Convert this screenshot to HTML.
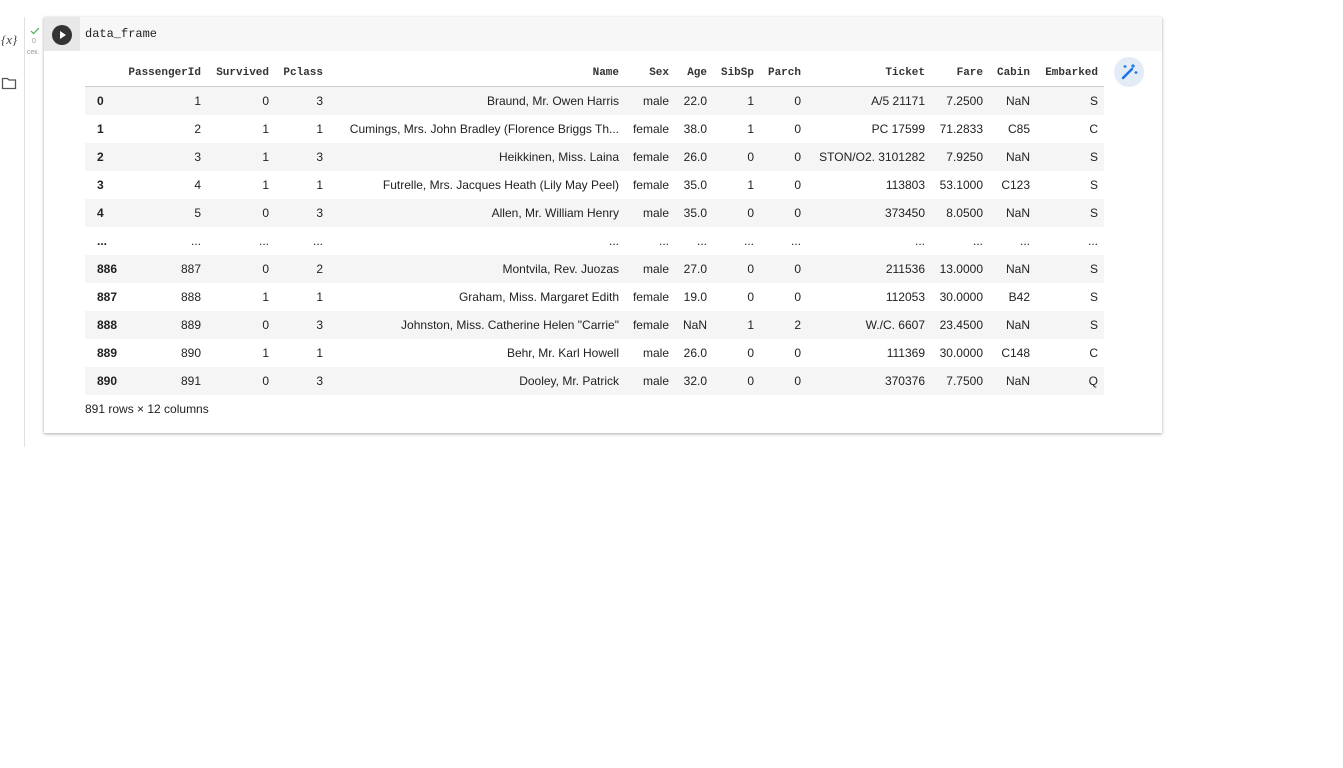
<!DOCTYPE html>
<html><head><style>
body{margin:0;width:1343px;height:768px;background:#fff;position:relative;overflow:hidden;font-family:"Liberation Sans",Arial,sans-serif;}
.vline{position:absolute;left:24px;top:17px;width:1px;height:430px;background:#e0e0e0}
.cell{position:absolute;left:44px;top:17px;width:1118px;height:416px;background:#fff;box-shadow:0 1px 3px rgba(0,0,0,.35)}
.run{position:absolute;left:0;top:0;width:36px;height:34px;background:#e8e8e8}
.code{position:absolute;left:36px;top:0;right:0;height:34px;background:#f7f7f7;font-family:"Liberation Mono",monospace;font-size:12px;line-height:35px;padding-left:5px;color:#222}
table{position:absolute;left:41px;top:42px;width:1019px;border-collapse:collapse;table-layout:fixed;font-size:12px;color:#222}
td,th{text-align:right;padding:0 6px 0 0;height:28px;white-space:nowrap;overflow:hidden}
th{font-family:"Liberation Mono",monospace;font-size:11px;font-weight:bold;height:27px;border-bottom:1px solid #ccc;color:#333}
tbody tr:nth-child(odd){background:#f5f5f5}
td:first-child{text-align:left;padding:0 0 0 12px;font-weight:bold;overflow:visible}
.foot{position:absolute;left:41px;top:385px;font-size:12px;color:#222}
.wand{position:absolute;left:1070px;top:40px;width:30px;height:30px;border-radius:50%;background:#e3ebf7}
</style></head><body>
<div style="position:absolute;left:1px;top:32px;font-family:'Liberation Serif',serif;font-style:italic;font-size:13px;color:#444">{x}</div>
<svg style="position:absolute;left:1px;top:76px" width="16" height="14"><path d="M1.5 2.5h5l1.5 1.5h6.5v8.5h-13z" fill="none" stroke="#555" stroke-width="1.3"/></svg>
<div class="vline"></div>
<svg style="position:absolute;left:30px;top:27px" width="10" height="8"><path d="M1 4l2.5 2.5L9 1" fill="none" stroke="#4caf50" stroke-width="1.2"/></svg>
<div style="position:absolute;left:32px;top:38px;font-size:7px;color:#999">0</div>
<div style="position:absolute;left:27px;top:49px;font-size:7px;color:#999">сек.</div>
<div class="cell">
<div class="run"><svg style="position:absolute;left:8px;top:8px" width="20" height="20"><circle cx="10" cy="10" r="10" fill="#333"/><path d="M8 6l6 4-6 4z" fill="#fff"/></svg></div>
<div class="code">data_frame</div>
<table>
<colgroup><col style="width:33px"><col style="width:89px"><col style="width:68px"><col style="width:54px"><col style="width:296px"><col style="width:50px"><col style="width:38px"><col style="width:47px"><col style="width:47px"><col style="width:124px"><col style="width:58px"><col style="width:47px"><col style="width:68px"></colgroup>
<thead><tr><th></th><th>PassengerId</th><th>Survived</th><th>Pclass</th><th>Name</th><th>Sex</th><th>Age</th><th>SibSp</th><th>Parch</th><th>Ticket</th><th>Fare</th><th>Cabin</th><th>Embarked</th></tr></thead>
<tbody>
<tr><td>0</td><td>1</td><td>0</td><td>3</td><td>Braund, Mr. Owen Harris</td><td>male</td><td>22.0</td><td>1</td><td>0</td><td>A/5 21171</td><td>7.2500</td><td>NaN</td><td>S</td></tr>
<tr><td>1</td><td>2</td><td>1</td><td>1</td><td>Cumings, Mrs. John Bradley (Florence Briggs Th...</td><td>female</td><td>38.0</td><td>1</td><td>0</td><td>PC 17599</td><td>71.2833</td><td>C85</td><td>C</td></tr>
<tr><td>2</td><td>3</td><td>1</td><td>3</td><td>Heikkinen, Miss. Laina</td><td>female</td><td>26.0</td><td>0</td><td>0</td><td>STON/O2. 3101282</td><td>7.9250</td><td>NaN</td><td>S</td></tr>
<tr><td>3</td><td>4</td><td>1</td><td>1</td><td>Futrelle, Mrs. Jacques Heath (Lily May Peel)</td><td>female</td><td>35.0</td><td>1</td><td>0</td><td>113803</td><td>53.1000</td><td>C123</td><td>S</td></tr>
<tr><td>4</td><td>5</td><td>0</td><td>3</td><td>Allen, Mr. William Henry</td><td>male</td><td>35.0</td><td>0</td><td>0</td><td>373450</td><td>8.0500</td><td>NaN</td><td>S</td></tr>
<tr><td>...</td><td>...</td><td>...</td><td>...</td><td>...</td><td>...</td><td>...</td><td>...</td><td>...</td><td>...</td><td>...</td><td>...</td><td>...</td></tr>
<tr><td>886</td><td>887</td><td>0</td><td>2</td><td>Montvila, Rev. Juozas</td><td>male</td><td>27.0</td><td>0</td><td>0</td><td>211536</td><td>13.0000</td><td>NaN</td><td>S</td></tr>
<tr><td>887</td><td>888</td><td>1</td><td>1</td><td>Graham, Miss. Margaret Edith</td><td>female</td><td>19.0</td><td>0</td><td>0</td><td>112053</td><td>30.0000</td><td>B42</td><td>S</td></tr>
<tr><td>888</td><td>889</td><td>0</td><td>3</td><td>Johnston, Miss. Catherine Helen "Carrie"</td><td>female</td><td>NaN</td><td>1</td><td>2</td><td>W./C. 6607</td><td>23.4500</td><td>NaN</td><td>S</td></tr>
<tr><td>889</td><td>890</td><td>1</td><td>1</td><td>Behr, Mr. Karl Howell</td><td>male</td><td>26.0</td><td>0</td><td>0</td><td>111369</td><td>30.0000</td><td>C148</td><td>C</td></tr>
<tr><td>890</td><td>891</td><td>0</td><td>3</td><td>Dooley, Mr. Patrick</td><td>male</td><td>32.0</td><td>0</td><td>0</td><td>370376</td><td>7.7500</td><td>NaN</td><td>Q</td></tr>
</tbody></table>
<div class="foot">891 rows × 12 columns</div>
<div class="wand"><svg style="position:absolute;left:6px;top:6px" width="18" height="18"><path d="M3 15L12 6" stroke="#1a73e8" stroke-width="2.5" stroke-linecap="round"/><path d="M13 1v4M11 3h4M16 8v3M14.5 9.5h3M5 2v3M3.5 3.5h3" stroke="#1a73e8" stroke-width="1.2"/></svg></div>
</div>
</body></html>
